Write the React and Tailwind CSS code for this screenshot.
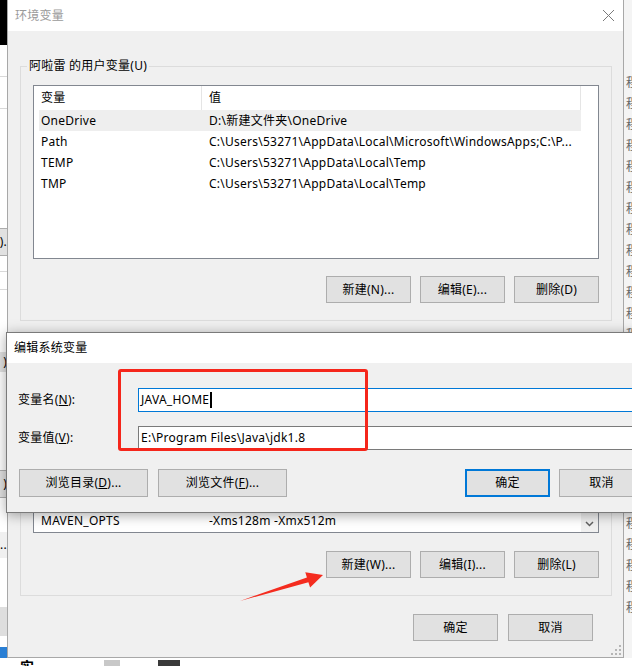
import React from "react";

const Btn = ({ children, className = "", focused = false }) => (
  <button
    type="button"
    className={`flex items-center justify-center bg-[#e1e1e1] ${
      focused ? "border-2 border-[#0078d7]" : "border border-[#adadad]"
    } ${className}`}
  >
    {children}
  </button>
);

const ListHeader = () => (
  <div className="flex h-[24px]">
    <div className="flex w-[163px] items-center border-r border-[#e5e5e5] pl-[2px]">变量</div>
    <div className="flex w-[379px] items-center border-r border-[#e5e5e5] pl-[7px]">值</div>
  </div>
);

const Row = ({ name, value, selected }) => (
  <div
    className={`flex h-[21px] w-[542px] items-center whitespace-nowrap ${selected ? "bg-[#eeeeee]" : ""}`}
  >
    <div className="w-[163px] overflow-hidden pl-[2px]">{name}</div>
    <div className="w-[379px] overflow-hidden pl-[7px]">{value}</div>
  </div>
);

const userVars = [
  { name: "OneDrive", value: "D:\\新建文件夹\\OneDrive", selected: true },
  { name: "Path", value: "C:\\Users\\53271\\AppData\\Local\\Microsoft\\WindowsApps;C:\\P..." },
  { name: "TEMP", value: "C:\\Users\\53271\\AppData\\Local\\Temp" },
  { name: "TMP", value: "C:\\Users\\53271\\AppData\\Local\\Temp" },
];

const sysVars = [
  { name: "CLASSPATH", value: ".;%JAVA_HOME%\\lib" },
  { name: "ComSpec", value: "C:\\WINDOWS\\system32\\cmd.exe" },
  { name: "DriverData", value: "C:\\Windows\\System32\\Drivers\\DriverData" },
  { name: "M2_HOME", value: "E:\\apache-maven-3.6.3" },
  { name: "MAVEN_HOME", value: "E:\\apache-maven-3.6.3" },
  { name: "JAVA_TOOL", value: "-Dfile.encoding=UTF-8" },
  { name: "MAVEN_OPTS", value: "-Xms128m -Xmx512m" },
];

// strip of the window behind, on the left
const LeftStrip = () => (
  <div className="flex w-[7px] flex-col overflow-hidden bg-white text-[12px] leading-none">
    <div className="h-[45px] bg-black" />
    <div className="h-[31px]" />
    <div className="h-[1px] bg-[#d9d9d9]" />
    <div className="h-[31px]" />
    <div className="h-[1px] bg-[#d9d9d9]" />
    <div className="h-[119px]" />
    <div className="flex h-[28px] items-center justify-end border-y border-[#adadad] bg-[#e1e1e1]">).</div>
    <div className="h-[15px]" />
    <div className="h-[1px] bg-[#d9d9d9]" />
    <div className="h-[17px]" />
    <div className="h-[1px] bg-[#d9d9d9]" />
    <div className="h-[62px]" />
    <div className="flex h-[20px] items-center justify-end bg-[#e1e1e1]">)</div>
    <div className="h-[98px]" />
    <div className="flex h-[28px] items-center justify-end border-y border-[#adadad] bg-[#e1e1e1]">)</div>
    <div className="h-[34px]" />
    <div className="flex h-[26px] items-center justify-end bg-[#f0f0f0]">...</div>
    <div className="h-[49px]" />
    <div className="h-[29px] bg-[#dedede]" />
    <div className="h-[11px]" />
    <div className="h-[11px] bg-[#2a7fd4]" />
  </div>
);

// strip of the window behind, on the right
const RightStrip = () => (
  <div className="flex w-[8px] flex-col overflow-hidden bg-[#f4f4f4] pt-[72px]">
    {Array.from({ length: 26 }).map((_, i) => (
      <div key={i} className="h-[21px] whitespace-nowrap pl-[2px] text-[12px] leading-[21px] text-[#666]">
        程
      </div>
    ))}
  </div>
);

export default function App() {
  return (
    <div className="relative h-[666px] w-[632px] overflow-hidden bg-white font-['Noto_Sans','Noto_Sans_CJK_SC',sans-serif] text-[12px] tracking-[0.25px] text-black">
      <div className="flex h-[658px]">
        <LeftStrip />

        {/* 环境变量 dialog */}
        <div className="relative flex w-[617px] flex-col border-x border-b border-[#a8a8a8] bg-[#f0f0f0]">
          <div className="flex h-[31px] shrink-0 items-center justify-between bg-white pl-[7px] pr-[9px]">
            <span className="text-[#9a9a9a]">环境变量</span>
            <svg width="11" height="11" viewBox="0 0 11 11">
              <path d="M0 0 L11 11 M11 0 L0 11" stroke="#7a7a7a" strokeWidth="1" />
            </svg>
          </div>

          <div className="flex flex-col pl-[12px] pr-[11px] pt-[27px]">
            <fieldset className="min-w-0 border border-[#dcdcdc] pb-[17px]">
              <legend className="ml-[6px] px-[2px] leading-[16px]">阿啦雷 的用户变量(U)</legend>
              <div className="px-[12px] pt-[11px]">
                <div className="h-[174px] border border-[#828790] bg-white pl-[5px]">
                  <ListHeader />
                  {userVars.map((v) => (
                    <Row key={v.name} {...v} />
                  ))}
                </div>
                <div className="mt-[17px] flex justify-end gap-[9px]">
                  <Btn className="h-[27px] w-[85px]">新建(N)...</Btn>
                  <Btn className="h-[27px] w-[85px]">编辑(E)...</Btn>
                  <Btn className="h-[27px] w-[85px]">删除(D)</Btn>
                </div>
              </div>
            </fieldset>

            <fieldset className="mt-[11px] min-w-0 border border-[#dcdcdc] pb-[17px]">
              <legend className="ml-[6px] px-[2px] leading-[16px]">系统变量(S)</legend>
              <div className="px-[12px] pt-[11px]">
                <div className="flex h-[174px] border border-[#828790] bg-white">
                  <div className="flex flex-1 flex-col overflow-hidden pl-[5px]">
                    <ListHeader />
                    {sysVars.map((v) => (
                      <Row key={v.name} {...v} />
                    ))}
                  </div>
                  <div className="flex w-[17px] flex-col justify-end bg-[#f0f0f0]">
                    <div className="flex h-[17px] items-center justify-center">
                      <svg width="9" height="6" viewBox="0 0 9 6">
                        <polyline points="1,1 4.5,4.5 8,1" fill="none" stroke="#606060" strokeWidth="1.5" />
                      </svg>
                    </div>
                  </div>
                </div>
                <div className="mt-[18px] flex justify-end gap-[9px]">
                  <Btn className="h-[27px] w-[85px]">新建(W)...</Btn>
                  <Btn className="h-[27px] w-[85px]">编辑(I)...</Btn>
                  <Btn className="h-[27px] w-[85px]">删除(L)</Btn>
                </div>
              </div>
            </fieldset>

            <div className="mt-[18px] flex justify-end gap-[10px] pr-[19px]">
              <Btn className="h-[27px] w-[85px]">确定</Btn>
              <Btn className="h-[27px] w-[85px]">取消</Btn>
            </div>
          </div>

          {/* size grip */}
          <svg className="absolute bottom-[2px] right-[2px]" width="10" height="10" viewBox="0 0 10 10">
            {[
              [8, 0],
              [4, 4],
              [8, 4],
              [0, 8],
              [4, 8],
              [8, 8],
            ].map(([x, y]) => (
              <rect key={`${x}-${y}`} x={x} y={y} width="2" height="2" fill="#b5b5b5" />
            ))}
          </svg>
        </div>

        <RightStrip />
      </div>

      {/* bottom strip of the window behind */}
      <div className="flex h-[8px] items-start overflow-hidden bg-white">
        <span className="ml-[20px] mt-[2px] text-[14px] font-bold leading-none">实</span>
        <div className="ml-[70px] mt-[2px] h-[6px] w-[16px] bg-[#c8c8c8]" />
        <div className="ml-[38px] mt-[2px] h-[6px] w-[22px] bg-[#3a3a3a]" />
      </div>

      {/* 编辑系统变量 dialog */}
      <div className="absolute left-[6px] top-[332px] flex h-[181px] w-[640px] flex-col border border-[#7a7a7a] bg-[#f0f0f0] shadow-[0_2px_12px_rgba(0,0,0,0.35)]">
        <div className="flex h-[30px] shrink-0 items-center bg-white pl-[7px]">编辑系统变量</div>
        <div className="flex flex-col pl-[11px]">
          <div className="mt-[25px] flex h-[24px] items-center">
            <span className="w-[120px]">
              变量名(<span className="underline">N</span>):
            </span>
            <div className="flex h-[24px] flex-1 items-center border border-[#0078d7] bg-white pl-[2px]">
              <span>JAVA_HOME</span>
              <span className="ml-[1px] h-[16px] w-[2px] bg-black" />
            </div>
          </div>
          <div className="mt-[14px] flex h-[24px] items-center">
            <span className="w-[120px]">
              变量值(<span className="underline">V</span>):
            </span>
            <div className="flex h-[24px] flex-1 items-center border border-[#7a7a7a] bg-white pl-[2px]">
              E:\Program Files\Java\jdk1.8
            </div>
          </div>
          <div className="mt-[19px] flex">
            <Btn className="ml-[1px] h-[28px] w-[129px]">
              浏览目录(<span className="underline">D</span>)...
            </Btn>
            <Btn className="ml-[10px] h-[28px] w-[129px]">
              浏览文件(<span className="underline">F</span>)...
            </Btn>
            <Btn focused className="ml-[178px] h-[28px] w-[85px]">
              确定
            </Btn>
            <Btn className="ml-[9px] h-[28px] w-[85px]">取消</Btn>
          </div>
        </div>
      </div>

      {/* annotations */}
      <div className="absolute left-[118px] top-[369px] h-[82px] w-[250px] rounded-[3px] border-[3px] border-[#f5261b]" />
      <svg className="absolute left-0 top-0" width="632" height="666" viewBox="0 0 632 666">
        <polygon
          points="240,601 306.9,577.4 305.3,572.2 323,575 310.1,587.4 308.4,582.2"
          fill="#f42c1f"
        />
      </svg>
    </div>
  );
}
